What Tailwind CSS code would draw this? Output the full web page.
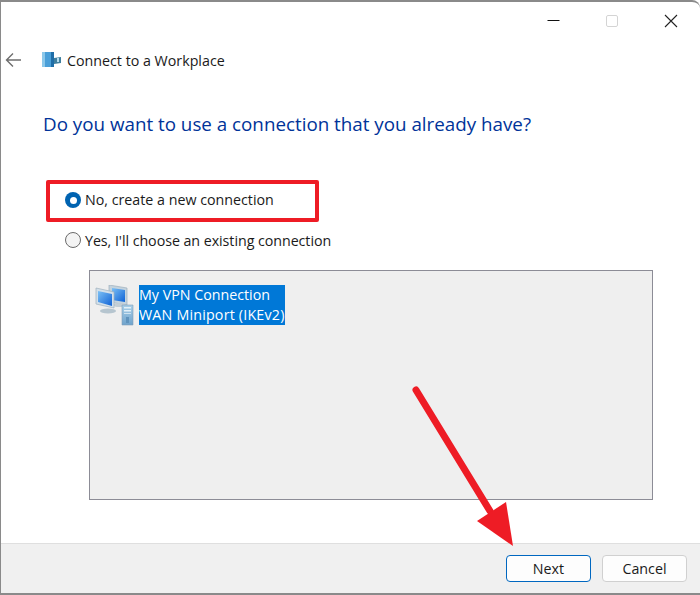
<!DOCTYPE html>
<html lang="en">
<head>
    <meta charset="UTF-8">
    <title>Connect to a Workplace</title>
    <script src="https://cdn.jsdelivr.net/npm/@tailwindcss/browser@4"></script>
</head>
<body class="bg-white">
    <div class="relative w-[700px] h-[595px] overflow-hidden flex flex-col bg-white border-t-2 border-l border-b-2 border-[#8a8a8a] rounded-tr-lg font-['Open_Sans','Noto_Sans',sans-serif] text-[14.25px] text-[#1a1a1a]">
        <!-- title bar -->
        <div class="flex justify-end h-[36px] shrink-0 pr-[22px] pt-[12px] gap-[45px]">
            <svg width="14" height="14" viewBox="0 0 14 14"><path d="M1.5 6.5h12" stroke="#111" stroke-width="1"/></svg>
            <svg width="14" height="14" viewBox="0 0 14 14"><rect x="1.5" y="1.5" width="11" height="11" rx="1.5" fill="none" stroke="#d4d4d4"/></svg>
            <svg width="14" height="14" viewBox="0 0 14 14"><path d="M1 1l12 12M13 1L1 13" stroke="#222" stroke-width="1.1"/></svg>
        </div>

        <!-- back + title -->
        <div class="flex items-center h-[44px] shrink-0 pl-[4px]">
            <svg width="17" height="16" viewBox="0 0 17 16" class="mr-[20px]"><path d="M16 8H1.5M8 1.5L1.5 8L8 14.5" fill="none" stroke="#6e6e6e" stroke-width="1.4"/></svg>
            <svg width="20" height="16" viewBox="0 0 20 16" class="mr-[5px]">
                <rect x="0" y="0" width="12" height="15" fill="#4a9fd8"/>
                <rect x="0" y="0" width="3" height="15" fill="#8cc8ea"/>
                <rect x="9" y="0" width="3" height="15" fill="#1f6ea8"/>
                <path d="M12 6l7-1v6l-7 1z" fill="#3f7f9f"/>
                <rect x="15" y="6" width="2" height="4" fill="#b5dcee"/>
            </svg>
            <span class="pt-[1px]">Connect to a Workplace</span>
        </div>

        <!-- content -->
        <div class="flex-1 pl-[42px] pr-[46px]">
            <h1 class="text-[18.8px] leading-[28px] mt-[28px] text-[#003399]">Do you want to use a connection that you already have?</h1>

            <div class="flex items-center h-[20px] mt-[52px] pl-[22px] gap-[4px]">
                <span class="w-[16px] h-[16px] rounded-full bg-[#0063b1] flex items-center justify-center">
                    <span class="w-[7px] h-[7px] rounded-full bg-white"></span>
                </span>
                <span>No, create a new connection</span>
            </div>
            <div class="flex items-center h-[20px] mt-[20px] pl-[22px] gap-[4px]">
                <span class="w-[16px] h-[16px] rounded-full border border-[#6b6b6b] bg-[#f4f4f4]"></span>
                <span class="pt-[1px] tracking-[-0.05px]">Yes, I'll choose an existing connection</span>
            </div>

            <div class="mt-[20px] ml-[46px] w-[564px] h-[230px] bg-[#efefef] border border-[#8c8c96] flex items-start pl-[5px] pt-[14px]">
                <svg width="40" height="42" viewBox="0 0 40 42" class="shrink-0 mr-[4px]">
                    <defs>
                        <linearGradient id="screen" x1="0" y1="0" x2="1" y2="1">
                            <stop offset="0" stop-color="#7cc0f5"/>
                            <stop offset="1" stop-color="#0f62d6"/>
                        </linearGradient>
                        <linearGradient id="tower" x1="0" y1="0" x2="0" y2="1">
                            <stop offset="0" stop-color="#a9cfe8"/>
                            <stop offset="1" stop-color="#6fa3cc"/>
                        </linearGradient>
                    </defs>
                    <path d="M14 0l18 3v17l-18-3z" fill="#c4d3de" stroke="#9fb0bd" stroke-width=".7"/>
                    <path d="M17 3l13 2v12l-13-2z" fill="url(#screen)"/>
                    <ellipse cx="24" cy="20" rx="6" ry="2" fill="#c3ced6"/>
                    <path d="M1 3l18 4v16L1 19z" fill="#d3e0ea" stroke="#9fb0bd" stroke-width=".7"/>
                    <path d="M3 6l14 3v12L3 17z" fill="url(#screen)"/>
                    <ellipse cx="13" cy="26" rx="8" ry="2.5" fill="#b6c5cf"/>
                    <path d="M27 20h11v20H27z" fill="url(#tower)" stroke="#7f9fb8" stroke-width=".6"/>
                    <rect x="29" y="22" width="7" height="1.5" fill="#e3f0f8"/>
                    <rect x="29" y="25" width="7" height="1.5" fill="#e3f0f8"/>
                    <rect x="29" y="28" width="7" height="1" fill="#cfe3f1"/>
                    <rect x="31" y="32" width="3" height="6" fill="#5f93bd"/>
                </svg>
                <div class="bg-[#0078d7] text-white leading-[20px]">
                    <div>My VPN Connection</div>
                    <div class="tracking-[0.2px]">WAN Miniport (IKEv2)</div>
                </div>
            </div>
        </div>

        <!-- footer -->
        <div class="h-[50px] shrink-0 bg-[#f0f0f0] border-t border-[#dfdfdf] flex justify-end items-start pt-[11px] pr-[13px] gap-[11px]">
            <button class="w-[85px] h-[27px] rounded-[4px] bg-[#fdfdfd] border border-[#0067c0] leading-none pt-[1px]">Next</button>
            <button class="w-[85px] h-[27px] rounded-[4px] bg-[#fdfdfd] border border-[#d0d0d0] leading-none pt-[1px]">Cancel</button>
        </div>

        <!-- annotations -->
        <div class="absolute left-[45px] top-[178px] w-[273px] h-[42px] border-4 border-[#ee1c25] rounded-[2px]"></div>
        <svg class="absolute left-[-1px] top-[-2px]" width="700" height="595" viewBox="0 0 700 595">
            <path d="M416 390L490 511" stroke="#ee1c25" stroke-width="7" stroke-linecap="round"/>
            <path d="M506 502L477 521L513 546z" fill="#ee1c25"/>
        </svg>
    </div>
</body>
</html>
